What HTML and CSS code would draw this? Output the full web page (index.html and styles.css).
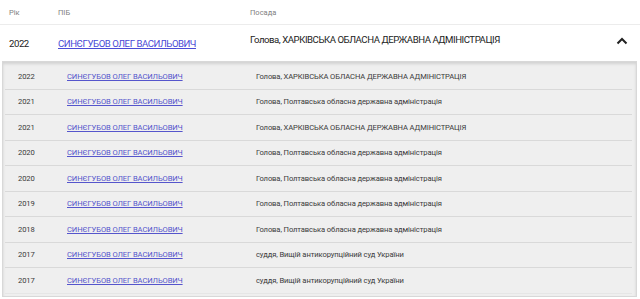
FILE: index.html
```html
<!DOCTYPE html>
<html lang="uk">
<head>
<meta charset="utf-8">
<link rel="stylesheet" href="styles.css">
</head>
<body>
<div class="table">
  <div class="head">
    <div class="c-year">Рік</div>
    <div class="c-name">ПІБ</div>
    <div class="c-pos">Посада</div>
  </div>
  <div class="main">
    <div class="c-year">2022</div>
    <div class="c-name"><a href="#">СИНЄГУБОВ ОЛЕГ ВАСИЛЬОВИЧ</a></div>
    <div class="c-pos">Голова, ХАРКІВСЬКА ОБЛАСНА ДЕРЖАВНА АДМІНІСТРАЦІЯ</div>
    <svg class="chev" width="12" height="8" viewBox="0 0 12 8"><path d="M1.5 6.5 L6 2 L10.5 6.5" fill="none" stroke="#222" stroke-width="2"/></svg>
  </div>
  <div class="panel">
    <div class="row"><div class="n-year">2022</div><div class="n-name"><a href="#">СИНЄГУБОВ ОЛЕГ ВАСИЛЬОВИЧ</a></div><div class="n-pos">Голова, ХАРКІВСЬКА ОБЛАСНА ДЕРЖАВНА АДМІНІСТРАЦІЯ</div></div>
    <div class="row"><div class="n-year">2021</div><div class="n-name"><a href="#">СИНЄГУБОВ ОЛЕГ ВАСИЛЬОВИЧ</a></div><div class="n-pos">Голова, Полтавська обласна державна адміністрація</div></div>
    <div class="row"><div class="n-year">2021</div><div class="n-name"><a href="#">СИНЄГУБОВ ОЛЕГ ВАСИЛЬОВИЧ</a></div><div class="n-pos">Голова, ХАРКІВСЬКА ОБЛАСНА ДЕРЖАВНА АДМІНІСТРАЦІЯ</div></div>
    <div class="row"><div class="n-year">2020</div><div class="n-name"><a href="#">СИНЄГУБОВ ОЛЕГ ВАСИЛЬОВИЧ</a></div><div class="n-pos">Голова, Полтавська обласна державна адміністрація</div></div>
    <div class="row"><div class="n-year">2020</div><div class="n-name"><a href="#">СИНЄГУБОВ ОЛЕГ ВАСИЛЬОВИЧ</a></div><div class="n-pos">Голова, Полтавська обласна державна адміністрація</div></div>
    <div class="row"><div class="n-year">2019</div><div class="n-name"><a href="#">СИНЄГУБОВ ОЛЕГ ВАСИЛЬОВИЧ</a></div><div class="n-pos">Голова, Полтавська обласна державна адміністрація</div></div>
    <div class="row"><div class="n-year">2018</div><div class="n-name"><a href="#">СИНЄГУБОВ ОЛЕГ ВАСИЛЬОВИЧ</a></div><div class="n-pos">Голова, Полтавська обласна державна адміністрація</div></div>
    <div class="row"><div class="n-year">2017</div><div class="n-name"><a href="#">СИНЄГУБОВ ОЛЕГ ВАСИЛЬОВИЧ</a></div><div class="n-pos">суддя, Вищій антикорупційний суд України</div></div>
    <div class="row"><div class="n-year">2017</div><div class="n-name"><a href="#">СИНЄГУБОВ ОЛЕГ ВАСИЛЬОВИЧ</a></div><div class="n-pos">суддя, Вищій антикорупційний суд України</div></div>
  </div>
</div>
</body>
</html>
```

FILE: styles.css
```css
* { box-sizing: border-box; }
html, body { margin: 0; padding: 0; background: #fff; }
body { font-family: Roboto, "Noto Sans", sans-serif; color: #333; }
.table { width: 640px; }
.head {
  display: flex; align-items: center;
  height: 25px;
  border-bottom: 1px solid #ececec;
  font-size: 7.5px; color: #808080;
}
.c-year { width: 58px; padding-left: 9px; }
.c-name { width: 192px; }
.c-pos { flex: 1; }
.main {
  display: flex; align-items: center;
  height: 36px;
  font-size: 9.6px; letter-spacing: -0.45px; color: #222;
  position: relative;
}
.main .c-pos { margin-top: -8px; }
.main a { color: #4a4ad6; }
.chev { position: absolute; right: 12px; top: 12px; }
.panel {
  margin: 0 3px 0 2px;
  background: #efefef;
  border: 1px solid #d8d8d8;
  box-shadow: inset 0 2px 3px rgba(0,0,0,0.12);
  padding: 2px 4px 2px 2px;
}
.row {
  display: flex; align-items: center;
  height: 25.5px;
  border-bottom: 1px solid #d9d9d9;
  font-size: 7.6px; letter-spacing: -0.1px; color: #3a3a3a;
}
.row:last-child { border-bottom: 1px solid #e6e6e6; }
.n-year { width: 62px; padding-left: 13px; }
.n-name { width: 189px; }
.n-name a { color: #5555cc; }
.n-pos { flex: 1; }
```
